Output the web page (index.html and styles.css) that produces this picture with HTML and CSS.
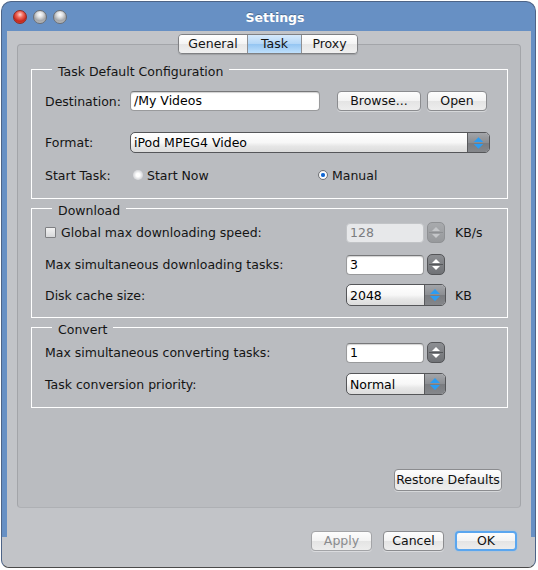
FILE: index.html
```html
<!DOCTYPE html>
<html lang="en">
<head>
  <meta charset="UTF-8">
  <title>Settings</title>
  <link rel="stylesheet" href="styles.css">
</head>
<body>
  <div class="window">
    <div class="titlebar">
      <div class="lights">
        <span class="light red"></span>
        <span class="light"></span>
        <span class="light"></span>
      </div>
      <div class="title">Settings</div>
      <div></div>
    </div>

    <div class="content">
      <div class="tabs">
        <span class="tab tab-general">General</span>
        <span class="tab tab-task active">Task</span>
        <span class="tab tab-proxy">Proxy</span>
      </div>

      <div class="pane">
        <fieldset class="group group-task">
          <legend>Task Default Configuration</legend>
          <div class="row row-dest">
            <span class="label label-short">Destination:</span>
            <span class="field field-dest">/My Videos</span>
            <span class="btn btn-browse">Browse...</span>
            <span class="btn btn-open">Open</span>
          </div>
          <div class="row row-format">
            <span class="label label-short">Format:</span>
            <div class="combo combo-wide">
              <span class="combo-value">iPod MPEG4 Video</span>
              <span class="combo-arrows">
                <svg width="22" height="19" viewBox="0 0 22 19"><path d="M6 9 L11 4 L16 9 Z M6 11 L11 16 L16 11 Z" fill="#2c9cf2"/></svg>
              </span>
            </div>
          </div>
          <div class="row row-radio">
            <span class="label label-short">Start Task:</span>
            <span class="radio-item radio-first"><span class="radio"></span>Start Now</span>
            <span class="radio-item"><span class="radio checked"></span>Manual</span>
          </div>
        </fieldset>

        <fieldset class="group group-download">
          <legend>Download</legend>
          <div class="row row-d1">
            <span class="label label-long"><span class="checkbox"></span>Global max downloading speed:</span>
            <span class="field field-spin disabled">128</span>
            <span class="spin disabled">
              <svg width="16" height="19" viewBox="0 0 16 19"><path d="M4 8 L8 4 L12 8 Z M4 11 L8 15 L12 11 Z" fill="#c4c6c9"/><path d="M1 9.5 H15" stroke="#8d8f92"/></svg>
            </span>
            <span class="unit">KB/s</span>
          </div>
          <div class="row row-d2">
            <span class="label label-long">Max simultaneous downloading tasks:</span>
            <span class="field field-spin">3</span>
            <span class="spin">
              <svg width="16" height="19" viewBox="0 0 16 19"><path d="M4 8 L8 4 L12 8 Z M4 11 L8 15 L12 11 Z" fill="#fff"/><path d="M1 9.5 H15" stroke="#55575a"/></svg>
            </span>
          </div>
          <div class="row row-d3">
            <span class="label label-long">Disk cache size:</span>
            <div class="combo combo-small">
              <span class="combo-value">2048</span>
              <span class="combo-arrows">
                <svg width="20" height="20" viewBox="0 0 20 20"><path d="M5 9 L10 4 L15 9 Z M5 11 L10 16 L15 11 Z" fill="#2c9cf2"/></svg>
              </span>
            </div>
            <span class="unit unit-kb">KB</span>
          </div>
        </fieldset>

        <fieldset class="group group-convert">
          <legend>Convert</legend>
          <div class="row row-c1">
            <span class="label label-long">Max simultaneous converting tasks:</span>
            <span class="field field-spin">1</span>
            <span class="spin">
              <svg width="16" height="19" viewBox="0 0 16 19"><path d="M4 8 L8 4 L12 8 Z M4 11 L8 15 L12 11 Z" fill="#fff"/><path d="M1 9.5 H15" stroke="#55575a"/></svg>
            </span>
          </div>
          <div class="row row-c2">
            <span class="label label-long">Task conversion priority:</span>
            <div class="combo combo-small">
              <span class="combo-value">Normal</span>
              <span class="combo-arrows">
                <svg width="20" height="20" viewBox="0 0 20 20"><path d="M5 9 L10 4 L15 9 Z M5 11 L10 16 L15 11 Z" fill="#2c9cf2"/></svg>
              </span>
            </div>
          </div>
        </fieldset>

        <div class="restore-row">
          <span class="btn btn-restore">Restore Defaults</span>
        </div>
      </div>

      <div class="footer">
        <span class="btn btn-foot disabled">Apply</span>
        <span class="btn btn-foot">Cancel</span>
        <span class="btn btn-foot btn-ok">OK</span>
      </div>
    </div>
  </div>
</body>
</html>
```

FILE: styles.css
```css
* {
  box-sizing: border-box;
}
body {
  margin: 0;
  background-color: #ffffff;
  font-family: "DejaVu Sans", sans-serif;
  font-size: 12.5px;
  color: #141414;
}
.window {
  margin: 1px 0 0 1px;
  width: 535px;
  height: 567px;
  border: 1px solid #4d6487;
  border-bottom-color: #4a4a4a;
  border-radius: 10px 10px 8px 8px;
  background: linear-gradient(#c2c4c8, #c2c4c8) bottom / 100% 30px no-repeat, #6790c4;
  padding: 0 4px 0 5px;
  display: flex;
  flex-direction: column;
  overflow: hidden;
}
.titlebar {
  height: 29px;
  display: grid;
  grid-template-columns: 1fr auto 1fr;
  align-items: center;
}
.lights {
  display: flex;
  gap: 6px;
  padding-left: 6px;
  padding-top: 1px;
}
.light {
  width: 14px;
  height: 14px;
  border-radius: 50%;
  border: 1px solid #6c6f74;
  background: radial-gradient(circle at 50% 30%, #ffffff 0, #e2e3e5 25%, #a4a6a9 60%, #c9cbcd 100%);
}
.light.red {
  border-color: #8e2a22;
  background: radial-gradient(circle at 50% 30%, #ffd6cf 0, #f06a5c 30%, #c7261a 65%, #e85a48 100%);
}
.title {
  color: #ffffff;
  font-weight: bold;
  font-size: 12.5px;
  padding-left: 12px;
  padding-top: 2px;
  text-shadow: 0 -1px 0 rgba(0, 0, 0, 0.25);
}
.content {
  flex: 1;
  background-color: #c2c4c8;
  display: flex;
  flex-direction: column;
  padding-top: 3px;
}
.tabs {
  align-self: center;
  display: flex;
  height: 20px;
  border: 1px solid #7f8083;
  border-radius: 4px;
  overflow: hidden;
  position: relative;
  z-index: 1;
  margin-left: -2px;
  box-shadow: 0 1px 1px rgba(0, 0, 0, 0.15);
}
.tab {
  text-align: center;
  line-height: 18px;
  background: linear-gradient(#ffffff, #f4f4f4 50%, #e6e6e6 51%, #f0f0f0);
}
.tab + .tab {
  border-left: 1px solid #8e8f92;
}
.tab-general {
  width: 68px;
}
.tab-task {
  width: 54px;
}
.tab-proxy {
  width: 56px;
}
.tab.active {
  background: linear-gradient(#d6eafc, #b3d6f7 50%, #94c5f2 51%, #bfe0fc);
}
.pane {
  margin: -10px 10px 0;
  height: 464px;
  border: 1px solid #a3a5a9;
  border-bottom-color: #aeb0b4;
  border-radius: 4px;
  background-color: #babcc0;
  padding: 15px 12px 16px 13px;
  display: flex;
  flex-direction: column;
}
.group {
  margin: 0;
  min-width: 0;
  border: 1px solid #ffffff;
  padding: 0 13px;
}
.group legend {
  margin-left: 7px;
  padding: 4px 6px 0;
  line-height: 15px;
}
.group-task {
  padding-bottom: 15px;
}
.group-download {
  padding-bottom: 11px;
}
.group-convert {
  padding-bottom: 12px;
}
.row {
  display: flex;
  align-items: center;
}
.row-dest {
  margin-top: 12px;
  height: 20px;
}
.row-format {
  margin-top: 21px;
  height: 21px;
}
.row-radio {
  margin-top: 14px;
  height: 16px;
}
.row-d1 {
  margin-top: 4px;
  height: 21px;
}
.row-d2 {
  margin-top: 11px;
  height: 21px;
}
.row-d3 {
  margin-top: 9px;
  height: 22px;
}
.row-c1 {
  margin-top: 5px;
  height: 21px;
}
.row-c2 {
  margin-top: 10px;
  height: 22px;
}
.label {
  display: flex;
  align-items: center;
  flex-shrink: 0;
}
.label-short {
  width: 85px;
}
.label-long {
  width: 301px;
}
.field {
  height: 20px;
  line-height: 18px;
  padding: 0 3px;
  background-color: #ffffff;
  border: 1px solid #999a9c;
  border-top-color: #77787a;
  border-radius: 4px;
  box-shadow: inset 0 1px 1px rgba(0, 0, 0, 0.18);
  color: #000;
}
.field-dest {
  width: 190px;
}
.field-spin {
  width: 78px;
}
.field.disabled {
  background-color: #e7e8ea;
  border-color: #c2c4c7;
  color: #7c7d80;
  box-shadow: none;
}
.btn {
  height: 20px;
  line-height: 18px;
  text-align: center;
  border: 1px solid #8b8c8f;
  border-radius: 4px;
  background: linear-gradient(#fdfdfd, #f3f3f3 50%, #e4e4e4 51%, #ededed);
  box-shadow: 0 1px 0 rgba(255, 255, 255, 0.4);
  color: #111;
}
.btn-browse {
  width: 84px;
  margin-left: 17px;
}
.btn-open {
  width: 60px;
  margin-left: 6px;
}
.combo {
  display: flex;
  border: 1px solid #555659;
  border-radius: 5px;
  overflow: hidden;
  background: linear-gradient(#ffffff, #f7f7f7 50%, #e6e6e6 70%, #dcdcdc);
  color: #000;
}
.combo-wide {
  width: 360px;
  height: 21px;
}
.combo-small {
  width: 100px;
  height: 22px;
}
.combo-value {
  flex: 1;
  padding-left: 3px;
  display: flex;
  align-items: center;
}
.combo-arrows {
  width: 22px;
  display: flex;
  align-items: center;
  justify-content: center;
  border-left: 1px solid #58595c;
  background: linear-gradient(#a3a5a9, #8c8e92 50%, #7a7c80 51%, #85878b);
}
.combo-small .combo-arrows {
  width: 21px;
}
.radio-item {
  display: flex;
  align-items: center;
}
.radio-first {
  width: 185px;
  margin-left: 3px;
}
.radio {
  width: 10px;
  height: 10px;
  border-radius: 50%;
  margin-right: 4px;
  background: radial-gradient(#ffffff 25%, #dcdde0 60%, #cfd1d4);
}
.radio.checked {
  border: 1px solid #6f7175;
  background: radial-gradient(#0a56c2 0, #2277dc 30%, #ffffff 45%, #e4e4e4);
}
.checkbox {
  width: 11px;
  height: 11px;
  margin-right: 5px;
  border: 1px solid #7e7f82;
  border-radius: 1px;
  background: linear-gradient(#f2f2f2, #d7d8da);
}
.spin {
  width: 18px;
  height: 21px;
  margin-left: 3px;
  border: 1px solid #545558;
  border-radius: 5px;
  background: linear-gradient(#8d8f93, #707276);
  display: flex;
  align-items: center;
  justify-content: center;
}
.spin.disabled {
  border-color: #8f9194;
  background: linear-gradient(#a8aaad, #97999c);
}
.unit {
  margin-left: 10px;
}
.unit-kb {
  margin-left: 9px;
}
.restore-row {
  margin-top: auto;
  display: flex;
  justify-content: flex-end;
  padding-right: 6px;
}
.btn-restore {
  width: 108px;
  height: 22px;
  line-height: 20px;
}
.footer {
  display: flex;
  justify-content: flex-end;
  gap: 11px;
  padding: 23px 14px 16px 0;
}
.btn-foot {
  width: 61px;
}
.btn.disabled {
  color: #8a8b8e;
  border-color: #a3a4a7;
}
.btn-ok {
  width: 62px;
  border: 2px solid #5aa6ef;
  line-height: 16px;
  box-shadow: 0 0 2px #8cc4f6;
}
```
